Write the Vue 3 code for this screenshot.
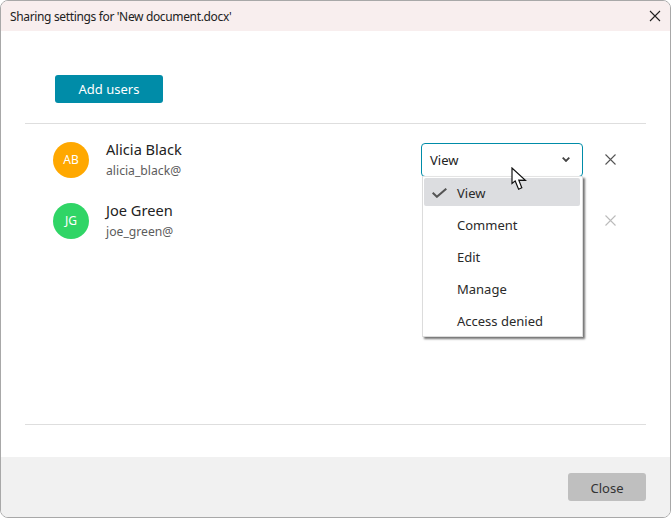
<script setup>
const users = [
  { initials: 'AB', name: 'Alicia Black', login: 'alicia_black@', color: '#ffa800', open: true },
  { initials: 'JG', name: 'Joe Green', login: 'joe_green@', color: '#30d566', open: false }
]
const options = ['View', 'Comment', 'Edit', 'Manage', 'Access denied']
</script>

<template>
  <div class="dialog">
    <header class="head">
      <span class="title">Sharing settings for 'New document.docx'</span>
      <svg class="close-x" width="12" height="12" viewBox="0 0 12 12"><path d="M1 1l10 10M11 1L1 11" stroke="#222" stroke-width="1.1" fill="none"/></svg>
    </header>
    <main class="body">
      <div class="toolbar"><button class="add">Add users</button></div>
      <div class="list">
        <div v-for="u in users" :key="u.name" class="row">
          <div class="avatar" :style="{ background: u.color }">{{ u.initials }}</div>
          <div class="who">
            <div class="name">{{ u.name }}</div>
            <div class="login">{{ u.login }}</div>
          </div>
          <div class="control">
            <div v-if="u.open" class="select">
              <span>View</span>
              <svg width="8" height="5" viewBox="0 0 8 5"><path d="M.7.7L4 4l3.3-3.3" stroke="#444" stroke-width="1.8" fill="none"/></svg>
            </div>
            <div v-if="u.open" class="menu">
              <div v-for="(o, i) in options" :key="o" class="opt" :class="{ sel: i === 0 }">
                <svg v-if="i === 0" class="tick" width="15" height="10" viewBox="0 0 15 10"><path d="M.7 4.8l4.2 4L14.3.7" stroke="#555" stroke-width="2" fill="none"/></svg>
                <span>{{ o }}</span>
              </div>
            </div>
            <svg v-if="u.open" class="cursor" width="17" height="25" viewBox="0 0 17 25"><path d="M1 1v15.5l3.2-2.6 3.4 8.4 3.2-1.5-3-7.6 6.6.2z" fill="#fff" stroke="#111" stroke-width="1.2" stroke-linejoin="miter"/></svg>
          </div>
          <svg class="remove" :class="{ dim: !u.open }" width="11" height="11" viewBox="0 0 11 11"><path d="M.5.5l10 10M10.5.5l-10 10" stroke="currentColor" stroke-width="1.1" fill="none"/></svg>
        </div>
      </div>
    </main>
    <footer class="foot"><button class="closebtn">Close</button></footer>
  </div>
</template>

<style>
html, body { margin: 0; background: #fff; }
</style>

<style scoped>
.dialog {
  box-sizing: border-box;
  width: 671px;
  height: 518px;
  border: 1px solid #a8a8a8;
  border-radius: 8px;
  overflow: hidden;
  display: flex;
  flex-direction: column;
  background: #fff;
  font-family: "Noto Sans", "Open Sans", sans-serif;
  color: #222;
}
.head {
  height: 30px;
  flex: none;
  background: #f8eeee;
  display: flex;
  align-items: center;
  justify-content: space-between;
  padding: 0 10px 0 9px;
}
.title { font-size: 12px; letter-spacing: -0.35px; color: #222; }
.close-x { margin-right: -1px; }
.body {
  flex: 1;
  margin: 0 24px;
  border-bottom: 1px solid #dedede;
  margin-bottom: 32px;
}
.toolbar {
  padding: 44px 30px 20px;
  border-bottom: 1px solid #dedede;
}
.add {
  display: block;
  width: 108px;
  height: 28px;
  border: none;
  border-radius: 3px;
  background: #008ca8;
  color: #fff;
  font: 13px "Noto Sans", sans-serif;
  padding: 0;
}
.list { padding: 0 28px; }
.row {
  display: flex;
  align-items: center;
  height: 61px;
}
.row:first-child { margin-top: 5px; }
.avatar {
  width: 36px;
  height: 36px;
  border-radius: 50%;
  color: #fff;
  font-size: 12px;
  display: flex;
  align-items: center;
  justify-content: center;
  flex: none;
}
.who { margin-left: 17px; width: 315px; height: 41px; }
.name { font-size: 14.6px; line-height: 20px; color: #222; }
.login { font-size: 12.2px; line-height: 20px; padding-top: 2px; color: #5c5c5c; }
.control { position: relative; width: 162px; height: 34px; flex: none; }
.select {
  box-sizing: border-box;
  height: 34px;
  border: 1px solid #008ca8;
  border-radius: 4px;
  display: flex;
  align-items: center;
  justify-content: space-between;
  padding: 0 12px 0 8px;
  font-size: 13px;
}
.menu {
  position: absolute;
  z-index: 2;
  left: 1px;
  top: 33px;
  box-sizing: border-box;
  width: 161px;
  height: 161px;
  background: #fff;
  border: 1px solid #dcdcdc;
  border-top-color: #e4e4e4;
  box-shadow: 2px 2px 2px rgba(0, 0, 0, 0.55);
  padding: 1px 2px 0 1px;
  font-size: 13px;
}
.opt {
  height: 28px;
  margin-bottom: 4px;
  border-radius: 2px;
  display: flex;
  align-items: center;
  padding-left: 33px;
  position: relative;
  color: #2a2a2a;
}
.opt span { position: relative; top: 1px; }
.sel { background: #dcdde0; }
.tick { position: absolute; left: 8px; top: 10px; }
.cursor { position: absolute; z-index: 3; left: 90px; top: 24px; }
.remove { margin-left: 22px; margin-top: -1px; color: #555; flex: none; }
.remove.dim { color: #bbb; }
.foot {
  height: 60px;
  flex: none;
  background: #f1f1f1;
  display: flex;
  align-items: center;
  justify-content: flex-end;
  padding-right: 24px;
}
.closebtn {
  width: 78px;
  height: 28px;
  border: none;
  border-radius: 3px;
  background: #bfbfbf;
  color: #333;
  font: 13px "Noto Sans", sans-serif;
  padding: 1px 0 0;
}
</style>
